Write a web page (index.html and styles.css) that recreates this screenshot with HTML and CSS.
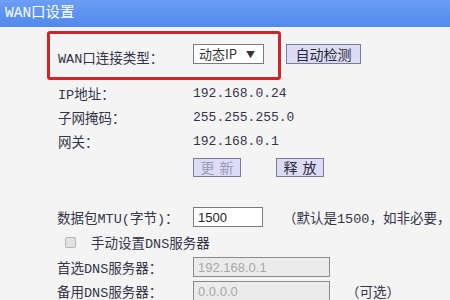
FILE: index.html
```html
<!DOCTYPE html>
<html>
<head>
  <meta charset="UTF-8">
  <title>WAN口设置</title>
  <link rel="stylesheet" href="styles.css">
</head>
<body>
  <!-- Panel title -->
  <div id="titleBar">WAN口设置</div>

  <div id="content">
    <!-- Connection type, highlighted -->
    <div class="connRow">
      <div class="highlight">
        <span class="connLabel">WAN口连接类型：</span>
        <div class="fakeSelect">动态IP <span class="arrow">▼</span></div>
      </div>
      <button class="btn btnWide">自动检测</button>
    </div>

    <!-- Current address info -->
    <div class="infoGrid">
      <span class="label">IP地址：</span><span class="value">192.168.0.24</span>
      <span class="label">子网掩码：</span><span class="value">255.255.255.0</span>
      <span class="label">网关：</span><span class="value">192.168.0.1</span>
      <span></span>
      <span class="btnPair">
        <button class="btn btnSmall disabled">更新</button>
        <button class="btn btnSmall">释放</button>
      </span>
    </div>

    <!-- MTU -->
    <div class="formRow mtuRow">
      <span class="label">数据包MTU(字节)：</span>
      <input class="textBox" type="text" value="1500">
      <span class="note">（默认是1500，如非必要，</span>
    </div>

    <!-- DNS -->
    <div class="checkRow">
      <span class="checkBox"></span>
      <span class="label">手动设置DNS服务器</span>
    </div>
    <div class="formRow">
      <span class="label">首选DNS服务器：</span>
      <input class="textBox dnsBox" type="text" value="192.168.0.1" disabled>
    </div>
    <div class="formRow">
      <span class="label">备用DNS服务器：</span>
      <input class="textBox dnsBox" type="text" value="0.0.0.0" disabled>
      <span class="note optional">（可选）</span>
    </div>
  </div>
</body>
</html>
```

FILE: styles.css
```css
body {
  margin: 0;
  padding: 0;
  background-color: #f4f4f4;
  font-family: "Liberation Mono", "Noto Sans CJK SC", monospace;
  font-size: 13px;
  color: #35354a;
  overflow: hidden;
  white-space: nowrap;
}
.label {
  font-size: 13.5px;
}
/* Blue title bar */
#titleBar {
  height: 27px;
  line-height: 27px;
  padding-left: 5px;
  color: white;
  background: linear-gradient(#6b9ef4, #5189ec);
  font-size: 14.5px;
}
#content {
  padding-left: 47px;
}
/* Connection type row with red highlight */
.connRow {
  display: flex;
  align-items: center;
  margin-top: 4px;
}
.highlight {
  display: flex;
  align-items: center;
  width: 220px;
  height: 43px;
  border: 3px solid #d0232a;
  border-radius: 3px;
  padding-left: 8px;
  box-sizing: content-box;
}
.connLabel {
  width: 135px;
  padding-top: 3px;
  font-size: 13.5px;
}
.fakeSelect {
  width: 64px;
  height: 18px;
  line-height: 18px;
  margin-top: -4px;
  border: 1px solid #7c7c7c;
  background: white;
  font-family: "Noto Sans CJK SC", sans-serif;
  font-size: 13px;
  color: #333;
  padding-left: 5px;
  box-sizing: content-box;
}
.arrow {
  font-size: 9px;
  margin-left: 6px;
  vertical-align: 1px;
}
/* Buttons */
.btn {
  font-family: "Noto Sans CJK SC", sans-serif;
  background: #dcdcf6;
  border: 1px solid #7a7a9a;
  color: #2a2a3a;
  padding: 0;
  margin: 0;
}
.btnWide {
  width: 75px;
  height: 20px;
  font-size: 14px;
  line-height: 18px;
  margin-left: 5px;
  margin-top: -4px;
}
.btnSmall {
  width: 48px;
  height: 19px;
  font-size: 14px;
  line-height: 17px;
  letter-spacing: 5px;
  padding-left: 5px;
}
.btn.disabled {
  color: #9a9ab4;
}
/* Address info */
.infoGrid {
  display: grid;
  grid-template-columns: 135px auto;
  grid-auto-rows: 24px;
  align-items: center;
  margin-left: 11px;
  margin-top: 1px;
}
.btnPair {
  display: flex;
  gap: 35px;
  padding-top: 4px;
}
/* Form rows */
.formRow {
  display: flex;
  align-items: center;
  height: 24px;
  margin-left: 10px;
}
.formRow .label {
  width: 136px;
  flex-shrink: 0;
}
.mtuRow {
  margin-top: 28px;
}
.textBox {
  width: 70px;
  height: 20px;
  box-sizing: border-box;
  border: 1px solid #7a7a7a;
  background: white;
  font-family: "Liberation Sans", sans-serif;
  font-size: 13px;
  color: #222;
  padding: 0 4px;
  margin: 0;
  flex-shrink: 0;
}
.dnsBox {
  width: 137px;
  background: #ebebeb;
  color: #a8a8a8;
  border-color: #8a8a8a;
}
.note {
  margin-left: 22px;
  font-size: 13.5px;
}
.mtuRow .note {
  margin-left: 20px;
}
.optional {
  margin-left: 16px;
}
/* Manual DNS checkbox */
.checkRow {
  display: flex;
  align-items: center;
  height: 26px;
  margin-left: 18px;
}
.checkBox {
  width: 9px;
  height: 9px;
  border: 1px solid #b4b4b4;
  border-radius: 2px;
  background: #e2e2e2;
  margin-right: 15px;
}
```
